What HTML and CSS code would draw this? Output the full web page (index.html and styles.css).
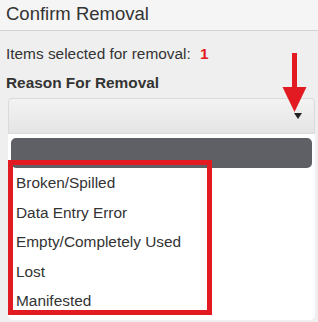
FILE: index.html
```html
<!DOCTYPE html>
<html>
<head>
  <title>Confirm Removal</title>
  <link rel="stylesheet" href="styles.css">
</head>
<body>
<div class="modal">
    <div class="modal-header">
        <h4>Confirm Removal</h4>
    </div>
    <div class="modal-body">
        <p class="selected-count">Items selected for removal: <span class="count-value">1</span></p>
        <div class="field-label">Reason For Removal</div>
        <div class="select-box">
            <span class="caret"></span>
        </div>
        <ul class="options">
            <li class="active"></li>
            <li>Broken/Spilled</li>
            <li>Data Entry Error</li>
            <li>Empty/Completely Used</li>
            <li>Lost</li>
            <li>Manifested</li>
        </ul>
    </div>
    <div class="highlight-box"></div>
    <svg class="red-arrow" viewBox="0 0 25 61" width="25" height="61">
        <rect x="10" y="1" width="5" height="36" fill="#e21b23"/>
        <polygon points="0.5,35 24.5,35 12.5,60" fill="#e21b23"/>
    </svg>
</div>
</body>
</html>
```
FILE: styles.css
```css
html, body {
    margin: 0;
    height: 100%;
    width: 100%;
}
body {
    background: #efefef;
    font-family: "Liberation Sans", Arial, sans-serif;
    color: #333;
    overflow: hidden;
}
.modal {
    position: relative;
    height: 100%;
}
.modal-header {
    height: 31px;
    box-sizing: border-box;
    padding: 4px 6px 0;
    background: #f5f5f5;
    border-bottom: 1px solid #d2d2d2;
}
.modal-header h4 {
    margin: 0;
    font-size: 18.5px;
    font-weight: normal;
    line-height: 20px;
}
.modal-body {
    padding: 14px 3px 0 6px;
    font-size: 15.4px;
}
.selected-count {
    margin: 0;
    line-height: 18px;
}
.count-value {
    color: #e21b23;
    font-weight: bold;
    margin-left: 5px;
}
.field-label {
    margin-top: 11px;
    font-weight: bold;
    line-height: 18px;
}
.select-box {
    position: relative;
    margin: 6px 0 0 2px;
    height: 36px;
    box-sizing: border-box;
    border: 1px solid #dadada;
    border-radius: 4px 4px 0 0;
    background: linear-gradient(#f3f3f3, #e4e4e4);
}
.caret {
    position: absolute;
    right: 12px;
    top: 14px;
    width: 0;
    height: 0;
    border-left: 4.5px solid transparent;
    border-right: 4.5px solid transparent;
    border-top: 6px solid #222;
}
.options {
    list-style: none;
    margin: 0 0 0 2px;
    padding: 4px 3px;
    background: #fff;
    border-radius: 0 0 5px 5px;
}
.options li {
    height: 29.5px;
    line-height: 29.5px;
    padding-left: 5px;
    white-space: nowrap;
}
.options li.active {
    height: 30px;
    background: #5f6066;
    border-radius: 5px;
}
.highlight-box {
    position: absolute;
    left: 8px;
    top: 160px;
    width: 204px;
    height: 155px;
    box-sizing: border-box;
    border: 5px solid #e21b23;
}
.red-arrow {
    position: absolute;
    left: 282px;
    top: 52px;
}
```
